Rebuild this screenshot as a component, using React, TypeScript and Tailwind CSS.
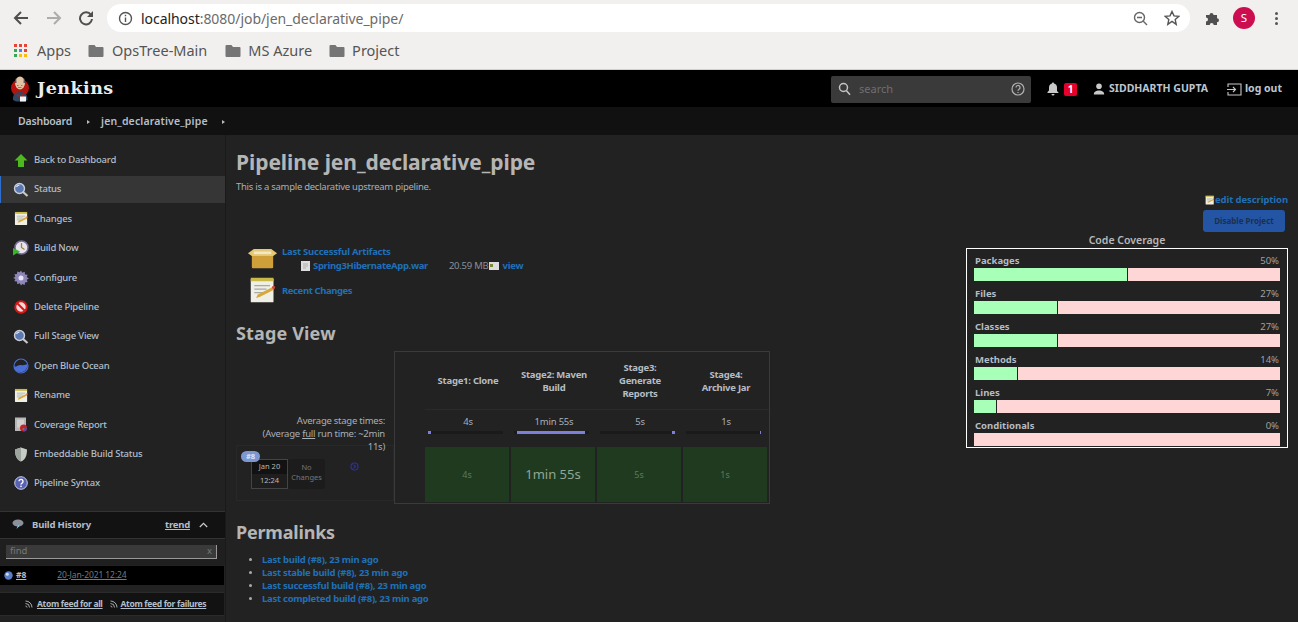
import React from "react";

const font = { fontFamily: '"Noto Sans", "Open Sans", sans-serif' };

function Apps() {
  const c = ["#ea4335", "#ea4335", "#ea4335", "#34a853", "#4285f4", "#ea4335", "#34a853", "#fbbc04", "#fbbc04"];
  return (
    <div className="grid grid-cols-3 gap-[2px] w-[13px]">
      {c.map((x, i) => (
        <div key={i} className="w-[3px] h-[3px]" style={{ background: x }} />
      ))}
    </div>
  );
}

function Folder() {
  return (
    <svg width="16" height="14" viewBox="0 0 16 14">
      <path d="M1.5 1h5l1.5 2h6.5a1 1 0 0 1 1 1v8a1 1 0 0 1-1 1h-13a1 1 0 0 1-1-1V2a1 1 0 0 1 1-1z" fill="#757575" />
    </svg>
  );
}

function Chrome() {
  return (
    <div className="h-[70px] bg-[#f1f0ee] border-b border-[#cfcfcf] shrink-0">
      <div className="h-[36px] flex items-center">
        <svg className="ml-[13px]" width="16" height="16" viewBox="0 0 16 16" fill="none" stroke="#4f4f4f" strokeWidth="2">
          <path d="M15 8H2M8 2L2 8l6 6" />
        </svg>
        <svg className="ml-[17px]" width="16" height="16" viewBox="0 0 16 16" fill="none" stroke="#acacac" strokeWidth="2">
          <path d="M1 8h13M8 2l6 6-6 6" />
        </svg>
        <svg className="ml-[16px]" width="16" height="16" viewBox="0 0 16 16" fill="none">
          <path d="M13 5a6 6 0 1 0 1 4" stroke="#4f4f4f" strokeWidth="2" />
          <path d="M15 1v6H9z" fill="#4f4f4f" />
        </svg>
        <div className="ml-[13px] w-[1083px] h-[28px] bg-white rounded-full flex items-center">
          <svg className="ml-[11px]" width="15" height="15" viewBox="0 0 15 15" fill="none" stroke="#555" strokeWidth="1.4">
            <circle cx="7.5" cy="7.5" r="6" />
            <path d="M7.5 6.5v4.5M7.5 3.8v1.4" />
          </svg>
          <div className="ml-[8px] text-[14px] tracking-[-0.05px] text-[#6b6b6b]" style={font}>
            <span className="text-[#222]">localhost</span>:8080/job/jen_declarative_pipe/
          </div>
          <svg className="ml-auto" width="15" height="15" viewBox="0 0 15 15" fill="none" stroke="#666" strokeWidth="1.4">
            <circle cx="6.5" cy="6.5" r="5" />
            <path d="M4 6.5h5M10.3 10.3L14 14" />
          </svg>
          <svg className="ml-[16px] mr-[10px]" width="16" height="16" viewBox="0 0 16 16" fill="none" stroke="#555" strokeWidth="1.4">
            <path d="M8 1.5l2 4.4 4.7.5-3.5 3.2 1 4.7L8 11.4l-4.2 2.9 1-4.7L1.3 6.4 6 5.9z" />
          </svg>
        </div>
        <svg className="ml-[15px]" width="16" height="16" viewBox="0 0 16 16" fill="#4f4f4f">
          <path d="M1 5h3.5a2 2 0 1 1 4 0H12v3.3a2 2 0 1 1 0 4V15H8.7a2 2 0 1 0-4 0H1v-3.500a2 2 0 1 0 0-4z" />
        </svg>
        <div className="ml-[12px] w-[22px] h-[22px] rounded-full bg-[#cc0e50] text-white text-[11.5px] flex items-center justify-center" style={font}>S</div>
        <div className="ml-[20px] flex flex-col gap-[2px]">
          <div className="w-[3px] h-[3px] rounded-full bg-[#555]" />
          <div className="w-[3px] h-[3px] rounded-full bg-[#555]" />
          <div className="w-[3px] h-[3px] rounded-full bg-[#555]" />
        </div>
      </div>
      <div className="h-[29px] flex items-center text-[14.5px] text-[#555]" style={font}>
        <div className="ml-[14px]"><Apps /></div>
        <span className="ml-[10px]">Apps</span>
        <div className="ml-[17px]"><Folder /></div>
        <span className="ml-[8px]">OpsTree-Main</span>
        <div className="ml-[18px]"><Folder /></div>
        <span className="ml-[7px]">MS Azure</span>
        <div className="ml-[17px]"><Folder /></div>
        <span className="ml-[7px]">Project</span>
      </div>
    </div>
  );
}

function Butler() {
  return (
    <svg width="20" height="27" viewBox="0 0 20 27">
      <circle cx="10" cy="13" r="9" fill="#b5140e" />
      <path d="M3 25c-.5-5 2-8 7-8s8 3 7.500 8l-3 1.500H6z" fill="#33465f" />
      <ellipse cx="10" cy="8" rx="5" ry="6.500" fill="#e3c3a3" />
      <path d="M5 8c-.3-2 0-3.500 1.200-5L6.500 8zM15 8c.3-2 0-3.500-1.200-5L13.500 8z" fill="#555" />
      <path d="M7 10.500h1.500M11 10.500h1.500M8 12.500h3.500" stroke="#7a5a45" strokeWidth="0.700" />
      <path d="M7 19l3 1.500 3.500-1.500v3l-3.500-1-3 1z" fill="#c8140e" />
      <rect x="10" y="21.500" width="6" height="5" fill="#f2f2f2" />
    </svg>
  );
}

function Header() {
  return (
    <div className="h-[37px] bg-black flex items-center shrink-0 pt-[1px]">
      <div className="ml-[10px] mt-[-1px]"><Butler /></div>
      <div className="ml-[7px] font-bold text-[#ececec] tracking-[0.45px] mt-[-1px]" style={{ fontFamily: '"DejaVu Serif", serif', fontSize: 17.5 }}>Jenkins</div>
      <div className="ml-auto w-[200px] h-[27px] bg-[#3a3a3a] rounded-[2px] flex items-center">
        <svg className="ml-[7px]" width="13" height="14" viewBox="0 0 13 14" fill="none" stroke="#c4c4c4" strokeWidth="1.500">
          <circle cx="5.500" cy="5.500" r="4" />
          <path d="M8.500 8.800l3.500 4" />
        </svg>
        <span className="ml-[8px] text-[11px] text-[#6f6f6f]" style={font}>search</span>
        <svg className="ml-auto mr-[6px]" width="14" height="14" viewBox="0 0 14 14" fill="none" stroke="#b0b0b0" strokeWidth="1.200">
          <circle cx="7" cy="7" r="6" />
          <path d="M5 5.500a2 2 0 1 1 3 1.700c-.7.400-1 .8-1 1.500M7 10v1" />
        </svg>
      </div>
      <svg className="ml-[16px]" width="12" height="14" viewBox="0 0 12 14" fill="#c8c8c8">
        <path d="M6 0.500c.7 0 1 .5 1 1 2 .5 3 2 3 4v3.500l1.500 1.500v.5H.5V10L2 8.500V5.500c0-2 1-3.500 3-4 0-.5.3-1 1-1zM4.500 12h3a1.500 1.500 0 0 1-3 0z" />
      </svg>
      <div className="ml-[5px] w-[13px] h-[13px] bg-[#e4002b] rounded-[2px] text-white text-[10px] font-bold flex items-center justify-center" style={font}>1</div>
      <svg className="ml-[16px]" width="12" height="12" viewBox="0 0 12 12" fill="#c8c8c8">
        <circle cx="6" cy="3.200" r="2.800" />
        <path d="M.8 11.500c0-3 2.500-4 5.200-4s5.200 1 5.200 4z" />
      </svg>
      <div className="ml-[4px] text-[10.5px] font-bold text-[#bcc6d0]" style={font}>SIDDHARTH GUPTA</div>
      <svg className="ml-[19px]" width="15" height="13" viewBox="0 0 15 13" fill="none" stroke="#c8c8c8" strokeWidth="1.100">
        <path d="M1 4V1h13v11H1V9M0 6.500h8M6 4l2.500 2.500L6 9" />
      </svg>
      <div className="ml-[3px] mr-[16px] text-[10.5px] font-bold text-[#bcc6d0]" style={font}>log out</div>
    </div>
  );
}

function Crumb() {
  const Tri = () => <span className="block w-0 h-0 border-y-[2.500px] border-y-transparent border-l-[3px] border-l-[#bbb]" />;
  return (
    <div className="h-[28px] bg-[#111] flex items-center text-[10.5px] font-semibold text-[#b4bfca] shrink-0 pt-[1px]" style={font}>
      <span className="ml-[18px] tracking-[-0.2px]">Dashboard</span>
      <span className="ml-[15px]"><Tri /></span>
      <span className="ml-[11px] tracking-[0.15px]">jen_declarative_pipe</span>
      <span className="ml-[14px]"><Tri /></span>
    </div>
  );
}

function Notepad({ s = 16 }: { s?: number }) {
  return (
    <svg width={s} height={s} viewBox="0 0 16 16">
      <rect x="1" y="1.500" width="13" height="13.500" rx="0.500" fill="#efefe6" />
      <rect x="1" y="1" width="13" height="2" fill="#c9b949" />
      <path d="M3 5.500h9M3 7.500h7M3 9.500h5" stroke="#a8a8a8" strokeWidth="0.800" />
      <path d="M4 12.500l1-2 8-4 1 1.500-8 4z" fill="#d8a93a" />
      <circle cx="14" cy="6.500" r="0.900" fill="#d43" />
    </svg>
  );
}

function Magnifier() {
  return (
    <svg width="16" height="16" viewBox="0 0 16 16">
      <path d="M9.500 9.500l5 4.500" stroke="#c8c8c8" strokeWidth="2.200" />
      <circle cx="6.500" cy="6.500" r="5" fill="#5b78b0" stroke="#c9ced8" strokeWidth="1.400" />
      <path d="M3.500 5a3.500 3.500 0 0 1 3-2" stroke="#e8ecf5" strokeWidth="1.200" fill="none" />
    </svg>
  );
}

const sideIcons: Record<string, React.ReactNode> = {
  back: (
    <svg width="14" height="13" viewBox="0 0 14 13"><path d="M7 0l6.500 6.500H10V13H4V6.500H.5z" fill="#4fb81f" /></svg>
  ),
  build: (
    <svg width="16" height="16" viewBox="0 0 16 16">
      <circle cx="8.500" cy="7.500" r="6.500" fill="#e8e4ee" stroke="#77709a" strokeWidth="1.500" />
      <path d="M8.500 3v4.500l3 2" stroke="#9a8a2a" strokeWidth="1.300" fill="none" />
      <path d="M0 8l7 3.500L0 15.500z" fill="#38b52a" />
    </svg>
  ),
  gear: (
    <svg width="16" height="16" viewBox="0 0 16 16">
      <path d="M8 0.500l1.300 2.200 2.400-.9.300 2.600 2.600.3-.9 2.400 2.200 1.300-2.200 1.300.9 2.400-2.600.3-.3 2.600-2.400-.9L8 15.500l-1.300-2.200-2.400.9-.3-2.600-2.600-.3.9-2.400L.1 8l2.200-1.300-.9-2.400 2.600-.3.3-2.600 2.400.9z" fill="#8d86b8" />
      <circle cx="8" cy="8" r="2.500" fill="#e7e5f3" />
    </svg>
  ),
  del: (
    <svg width="14" height="14" viewBox="0 0 14 14" fill="none">
      <circle cx="7" cy="7" r="5.700" stroke="#d81818" strokeWidth="2" fill="#f3dada" />
      <path d="M3 3l8 8" stroke="#d81818" strokeWidth="2" />
    </svg>
  ),
  ocean: (
    <svg width="16" height="16" viewBox="0 0 16 16">
      <circle cx="8" cy="8" r="7" fill="#222" stroke="#4a6fd6" strokeWidth="1.200" />
      <path d="M1.300 8.500c2 .5 4.500-2 6.700-1.500s4.500 0 6.700-1c.3 4-3 8.200-6.700 8.200S1 12 1.300 8.500z" fill="#4a6fd6" />
    </svg>
  ),
  report: (
    <svg width="14" height="15" viewBox="0 0 14 15">
      <rect x="1" y="0.500" width="11" height="13.500" fill="#b7b7b7" />
      <rect x="3" y="2.500" width="7" height="8" fill="#d0d0d0" />
      <circle cx="9.500" cy="11" r="3.500" fill="#c7202a" />
      <path d="M9.500 11v3.500a3.500 3.500 0 0 0 3.500-3.500z" fill="#6b3fa0" />
      <circle cx="9.500" cy="12" r="1" fill="#4a9e30" />
    </svg>
  ),
  shield: (
    <svg width="14" height="15" viewBox="0 0 14 15"><path d="M7 0.500l6 2c0 6-1.500 10-6 12-4.500-2-6-6-6-12z" fill="#c6ccc6" /><path d="M7 .5v14c-4.500-2-6-6-6-12z" fill="#9ea59e" /></svg>
  ),
  help: (
    <svg width="14" height="14" viewBox="0 0 14 14">
      <circle cx="7" cy="7" r="6.300" fill="#5762b4" stroke="#c9cdea" strokeWidth="1" />
      <path d="M5 5.300a2 2 0 1 1 3 1.800c-.7.400-1 .8-1 1.500" stroke="#fff" strokeWidth="1.400" fill="none" />
      <rect x="6.300" y="9.600" width="1.400" height="1.500" fill="#fff" />
    </svg>
  ),
};

const sideItems: [string, React.ReactNode][] = [
  ["Back to Dashboard", sideIcons.back],
  ["Status", <Magnifier />],
  ["Changes", <Notepad s={15} />],
  ["Build Now", sideIcons.build],
  ["Configure", sideIcons.gear],
  ["Delete Pipeline", sideIcons.del],
  ["Full Stage View", <Magnifier />],
  ["Open Blue Ocean", sideIcons.ocean],
  ["Rename", <Notepad s={15} />],
  ["Coverage Report", sideIcons.report],
  ["Embeddable Build Status", sideIcons.shield],
  ["Pipeline Syntax", sideIcons.help],
];

function Feed() {
  return (
    <svg width="8" height="8" viewBox="0 0 8 8" fill="none" stroke="#aaa" strokeWidth="1">
      <path d="M0.500 1a6.500 6.500 0 0 1 6.500 6.500M.5 3.500a4 4 0 0 1 4 4M.5 6a1.500 1.500 0 0 1 1.500 1.500" />
    </svg>
  );
}

function Sidebar() {
  return (
    <div className="w-[226px] shrink-0 border-r border-[#1a1a1a] flex flex-col text-[9.5px]" style={font}>
      <div className="pt-[10.500px] flex flex-col">
        {sideItems.map(([name, icon], i) => (
          <div key={name} className="h-[29.400px] flex items-center">
            <div
              className={`h-[27px] w-full flex items-center font-medium tracking-[-0.22px] text-[#b3bec9] border-l pl-[12px] ${i === 1 ? "bg-[#363636] border-[#2f6fd0]" : "border-transparent"}`}
            >
              <div className="w-[16px] flex justify-center shrink-0">{icon}</div>
              <span className="ml-[5px]">{name}</span>
            </div>
          </div>
        ))}
      </div>
      <div className="mt-[12.700px] border-y border-[#333] bg-[#121212] h-[28px] flex items-center font-bold text-[#b3bec9]">
        <svg className="ml-[12px]" width="12" height="11" viewBox="0 0 12 11">
          <ellipse cx="6" cy="4" rx="5.500" ry="3.500" fill="#8b9099" />
          <path d="M6 6L4.500 10l3-3z" fill="#7fd0f0" />
        </svg>
        <span className="ml-[8px] tracking-[-0.18px]">Build History</span>
        <span className="ml-auto underline tracking-[-0.2px]">trend</span>
        <svg className="ml-[9px] mr-[17px]" width="9" height="6" viewBox="0 0 9 6" fill="none" stroke="#ccc" strokeWidth="1.200">
          <path d="M.8 5l3.700-3.700L8.200 5" />
        </svg>
      </div>
      <div className="h-[26px] flex items-center bg-[#1f1f1f]">
        <div className="ml-[6px] w-[211px] h-[14px] bg-[#3a3a3a] border-b border-r border-[#999] flex items-center justify-between px-[4px] text-[#777]">
          <span>find</span>
          <span>x</span>
        </div>
      </div>
      <div className="h-[21px] bg-black border-y border-[#222] flex items-center font-bold text-[8.500px] mr-[1px]">
        <svg className="ml-[4px]" width="9" height="9" viewBox="0 0 9 9">
          <circle cx="4.500" cy="4.500" r="4.200" fill="#5a7ec8" />
          <circle cx="3.300" cy="3.200" r="1.500" fill="#cfdcf5" />
        </svg>
        <span className="ml-[3px] underline text-[#b3bec9]">#8</span>
        <span className="ml-[31px] underline text-[#6f7a85] font-normal tracking-[-0.1px]">20-Jan-2021 12:24</span>
      </div>
      <div className="mt-[6px] h-[24px] bg-[#121212] border-y border-[#2b2b2b] flex items-center text-[8.500px] font-bold tracking-[-0.33px] text-[#b3bec9] mr-[1px]">
        <div className="ml-[25px]"><Feed /></div>
        <span className="ml-[4px] underline">Atom feed for all</span>
        <div className="ml-[7px]"><Feed /></div>
        <span className="ml-[3px] underline">Atom feed for failures</span>
      </div>
    </div>
  );
}

const coverage: [string, number, number][] = [
  ["Packages", 50, 153],
  ["Files", 27, 83],
  ["Classes", 27, 83],
  ["Methods", 14, 43],
  ["Lines", 7, 22],
  ["Conditionals", 0, 0],
];

function Coverage() {
  return (
    <div className="w-[322px]">
      <div className="text-center text-[10.500px] font-semibold text-[#b8b8b8] leading-[15px]">Code Coverage</div>
      <div className="border border-white px-[7px] pt-[5px] h-[200px] flex flex-col gap-[6px] text-[9.500px]">
        {coverage.map(([name, pct, w]) => (
          <div key={name} className="flex flex-col h-[27px]">
            <div className="flex justify-between h-[14px] leading-[13px] px-[1px] pb-[1px] items-center">
              <span className="font-bold text-[#b5bcc4]">{name}</span>
              <span className="text-[#a0a0a0]">{pct}%</span>
            </div>
            <div className="h-[13px] bg-[#ffd6d6] flex">
              {w > 0 && <div className="h-full bg-[#a8ffb8] border-r border-[#222]" style={{ width: w + 1 }} />}
            </div>
          </div>
        ))}
      </div>
    </div>
  );
}

const stages = [
  { title: "Stage1: Clone", avg: "4s", barMl: 0, barW: 3, big: false },
  { title: "Stage2: Maven Build", avg: "1min 55s", barMl: 3, barW: 68, big: true },
  { title: "Stage3: Generate Reports", avg: "5s", barMl: 72, barW: 3, big: false },
  { title: "Stage4: Archive Jar", avg: "1s", barMl: 74, barW: 1, big: false },
];

function StageView() {
  return (
    <div className="flex items-start">
      <div className="w-[158px] shrink-0 pt-[63px] pr-[9px] relative h-[153px]">
        <div className="relative z-10 text-right text-[9.500px] leading-[13px] text-[#a8b0b8] tracking-[-0.25px]">
          Average stage times:
          <br />
          (Average <span className="underline">full</span> run time: ~2min
          <br />
          11s)
        </div>
        <div className="absolute left-0 top-[94px] w-[158px] h-[56px] border border-[#282828]">
          <div className="absolute left-[4px] top-[5px] z-10 w-[19px] h-[11px] rounded-full bg-[#7d98d0] text-[7.500px] font-bold text-[#dfe6f5] flex items-center justify-center">#8</div>
          <div className="absolute left-[14px] top-[13px] w-[37px] h-[30px] bg-[#1e1e1e] border border-[#444] text-[7.500px] text-[#b8b8b8] text-center">
            <div className="h-[14px] bg-[#121212] flex items-center justify-center">Jan 20</div>
            <div className="h-[14px] flex items-center justify-center">12:24</div>
          </div>
          <div className="absolute left-[51px] top-[13px] w-[37px] h-[30px] bg-[#1c1c1c] rounded-[3px] text-[7.500px] leading-[10px] text-[#777] text-center pt-[3px]">No<br />Changes</div>
          <svg className="absolute left-[113px] top-[16px]" width="9" height="9" viewBox="0 0 9 9" fill="none" stroke="#2e2ea0" strokeWidth="1.200">
            <circle cx="4.500" cy="4.500" r="3.500" />
            <path d="M3.500 2.800l2 1.700-2 1.700" />
          </svg>
        </div>
      </div>
      <div className="w-[376px] h-[153px] border border-[#3a3a3a] flex pl-[30px]">
        {stages.map((s) => (
          <div key={s.title} className="w-[86px] flex flex-col">
            <div className="h-[58px] flex items-center justify-center text-center text-[9.500px] leading-[13px] font-bold tracking-[-0.25px] text-[#b5bcc4] px-[9px] border-b border-[#2a2a2a]">
              {s.title}
            </div>
            <div className="h-[37px] px-[3px] pt-[5px]">
              <div className="text-center text-[9.500px] leading-[13px] text-[#a8b0b8] tracking-[-0.2px]">{s.avg}</div>
              <div className="mt-[3px] h-[3px] bg-[#1a1a1a] w-[75px]">
                <div className="h-[3px] bg-[#7d80d8]" style={{ width: s.barW, marginLeft: s.barMl }} />
              </div>
            </div>
            <div className="w-[84px] h-[55px] bg-[#1f3a1f] flex items-center justify-center">
              <span className={s.big ? "text-[13px] text-[#93a693]" : "text-[9px] text-[#5b7a5b]"}>{s.avg}</span>
            </div>
          </div>
        ))}
      </div>
    </div>
  );
}

function Main() {
  const link = "text-[#2070b8] font-bold";
  return (
    <div className="flex-1 flex min-w-0" style={font}>
      <div className="w-[740px] pl-[10px] shrink-0 flex flex-col">
        <div className="mt-[14px] text-[21px] leading-[26px] font-bold tracking-[-0.07px] text-[#b5b5b5]">Pipeline jen_declarative_pipe</div>
        <div className="mt-[5px] text-[9.500px] leading-[13px] text-[#a8b0b8] tracking-[-0.27px]">This is a sample declarative upstream pipeline.</div>
        <div className="mt-[53px] ml-[11px] flex flex-col text-[9.500px] tracking-[-0.25px]">
          <div className="flex items-start h-[26px]">
            <svg width="31" height="21" viewBox="0 0 32 24" preserveAspectRatio="none" className="mt-[2px]">
              <path d="M5 9h22v13a1 1 0 0 1-1 1H6a1 1 0 0 1-1-1z" fill="#cf9f3a" />
              <path d="M5 9L1 6l6-5h18l6 5-4 3z" fill="#e4c777" />
              <path d="M7 4h18v3H7z" fill="#f3e8c4" />
            </svg>
            <div className="ml-[4px] mt-[-1px]">
              <div className={link + " leading-[13px]"}>Last Successful Artifacts</div>
              <div className="mt-[1px] ml-[19px] flex items-center leading-[13px]">
                <svg width="9" height="10" viewBox="0 0 9 10">
                  <rect width="9" height="10" fill="#ddd" />
                  <path d="M2 3h5M2 5h5M2 7h3" stroke="#999" strokeWidth="0.700" />
                </svg>
                <span className={link + " ml-[3px] tracking-[-0.35px]"}>Spring3HibernateApp.war</span>
                <span className="ml-[21px] text-[#8a9199]">20.59 MB</span>
                <svg width="10" height="8" viewBox="0 0 10 8" className="ml-[1px]">
                  <rect width="10" height="8" fill="#ddd" />
                  <rect x="1" y="2" width="3" height="3" fill="#7a8a3a" />
                </svg>
                <span className={link + " ml-[3px]"}>view</span>
              </div>
            </div>
          </div>
          <div className="flex items-center mt-[4px] ml-[2px]">
            <Notepad s={28} />
            <span className={link + " ml-[5px] relative top-[1px] tracking-[-0.4px]"}>Recent Changes</span>
          </div>
        </div>
        <div className="mt-[18px] text-[18px] leading-[22px] font-bold tracking-[0.15px] text-[#b5b5b5]">Stage View</div>
        <div className="mt-[7px]"><StageView /></div>
        <div className="mt-[17px] text-[18px] leading-[22px] font-bold tracking-[-0.2px] text-[#b5b5b5]">Permalinks</div>
        <ul className="mt-[10px] ml-[13px] text-[9.500px] leading-[13px] tracking-[-0.27px]">
          {["Last build (#8), 23 min ago", "Last stable build (#8), 23 min ago", "Last successful build (#8), 23 min ago", "Last completed build (#8), 23 min ago"].map((t) => (
            <li key={t} className="flex items-center">
              <span className="w-[3px] h-[3px] rounded-full bg-[#aaa]" />
              <span className={link + " ml-[10px]"}>{t}</span>
            </li>
          ))}
        </ul>
      </div>
      <div className="flex-1 flex flex-col items-end pr-[10px] pt-[58px]">
        <div className="flex items-center h-[14px]">
          <Notepad s={10} />
          <span className="text-[9.500px] font-bold text-[#2070b8] tracking-[-0.1px]">edit description</span>
        </div>
        <div className="mt-[3px] mr-[3px] w-[82px] h-[22px] bg-[#2455a4] rounded-[3px] flex items-center justify-center text-[8px] font-bold text-[#1d2f4f]">Disable Project</div>
        <div className="mt-[1px]"><Coverage /></div>
      </div>
    </div>
  );
}

export default function App() {
  return (
    <div className="w-[1298px] h-[622px] overflow-hidden bg-[#222] flex flex-col">
      <Chrome />
      <Header />
      <Crumb />
      <div className="flex flex-1 min-h-0">
        <Sidebar />
        <Main />
      </div>
    </div>
  );
}
